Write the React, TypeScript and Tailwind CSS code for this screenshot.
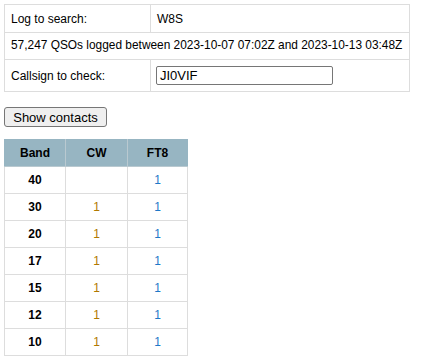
import React from "react";

const rows = [
  { band: "40", cw: "", ft8: "1" },
  { band: "30", cw: "1", ft8: "1" },
  { band: "20", cw: "1", ft8: "1" },
  { band: "17", cw: "1", ft8: "1" },
  { band: "15", cw: "1", ft8: "1" },
  { band: "12", cw: "1", ft8: "1" },
  { band: "10", cw: "1", ft8: "1" },
];

export default function App() {
  return (
    <div
      className="bg-white w-[422px] h-[360px] px-[4px] pt-[4px] text-[12px] text-black"
      style={{ fontFamily: '"Liberation Sans", Arial, sans-serif' }}
    >
      <table className="border-collapse w-[406px] table-fixed">
        <tbody>
          <tr className="h-[28px]">
            <td className="border border-[#dddddd] px-[6px] py-0 w-[146px] align-middle">Log to search:</td>
            <td className="border border-[#dddddd] px-[6px] py-0 align-middle">W8S</td>
          </tr>
          <tr className="h-[27px]">
            <td colSpan={2} className="border border-[#dddddd] px-[6px] py-0 align-middle whitespace-nowrap text-[11.9px]">
              57,247 QSOs logged between 2023-10-07 07:02Z and 2023-10-13 03:48Z
            </td>
          </tr>
          <tr className="h-[32px]">
            <td className="border border-[#dddddd] px-[6px] py-0 align-middle">Callsign to check:</td>
            <td className="border border-[#dddddd] px-[5px] py-0 align-middle">
              <div className="w-[177px] h-[19px] border border-[#767676] rounded-[2px] flex items-center px-[3px] text-[13px] leading-none">
                JI0VIF
              </div>
            </td>
          </tr>
        </tbody>
      </table>

      <div className="mt-[15px]">
        <button className="w-[103px] h-[20px] bg-[#efefef] border border-[#767676] rounded-[3px] text-[13px] leading-none flex items-center justify-center">
          Show contacts
        </button>
      </div>

      <table className="border-collapse mt-[12px] w-[184px] text-center">
        <thead>
          <tr className="h-[27px] bg-[#97b5c2]">
            <th className="border border-[#b9c9d0] border-t-[#97b5c2] border-l-[#97b5c2] w-[61px] font-bold p-0">Band</th>
            <th className="border border-[#b9c9d0] border-t-[#97b5c2] w-[62px] font-bold p-0">CW</th>
            <th className="border border-[#b9c9d0] border-t-[#97b5c2] border-r-[#97b5c2] font-bold p-0">FT8</th>
          </tr>
        </thead>
        <tbody>
          {rows.map((r) => (
            <tr key={r.band} className="h-[27px]">
              <td className="border border-[#dddddd] font-bold p-0">{r.band}</td>
              <td className="border border-[#dddddd] text-[#b07800] p-0">{r.cw}</td>
              <td className="border border-[#dddddd] text-[#1e78c8] p-0">{r.ft8}</td>
            </tr>
          ))}
        </tbody>
      </table>
    </div>
  );
}
